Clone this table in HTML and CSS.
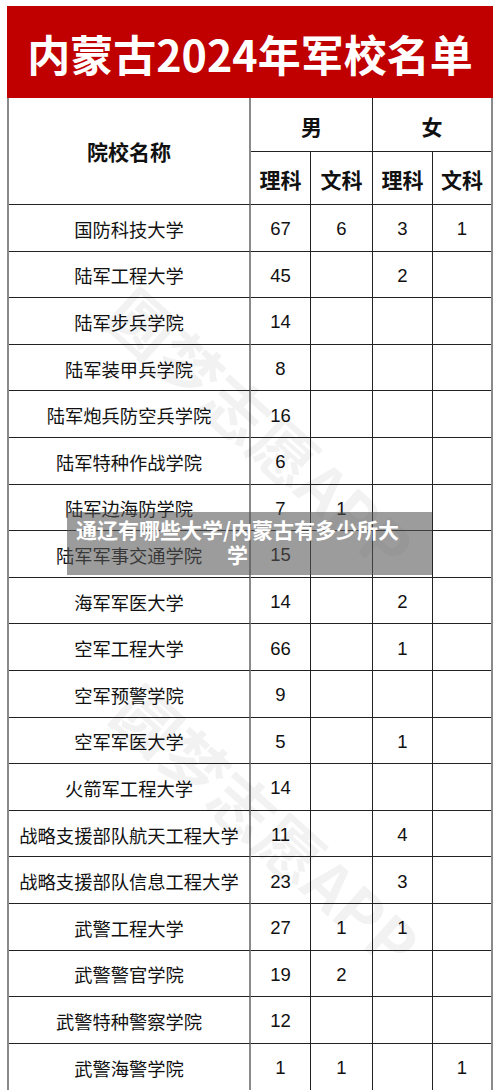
FILE: index.html
```html
<!DOCTYPE html>
<html lang="zh">
<head>
<meta charset="utf-8">
<link rel="stylesheet" href="styles.css">
</head>
<body>
<div class="page">
  <div class="sheet">
    <div class="title">内蒙古2024年军校名单</div>
    <div class="grid">
      <div class="cell hd name-h">院校名称</div>
      <div class="cell hd sex-m">男</div>
      <div class="cell hd sex-f">女</div>
      <div class="cell hd sub">理科</div><div class="cell hd sub">文科</div><div class="cell hd sub">理科</div><div class="cell hd sub">文科</div>

      <div class="cell nm">国防科技大学</div><div class="cell num">67</div><div class="cell num">6</div><div class="cell num">3</div><div class="cell num">1</div>
      <div class="cell nm">陆军工程大学</div><div class="cell num">45</div><div class="cell num"></div><div class="cell num">2</div><div class="cell num"></div>
      <div class="cell nm">陆军步兵学院</div><div class="cell num">14</div><div class="cell num"></div><div class="cell num"></div><div class="cell num"></div>
      <div class="cell nm">陆军装甲兵学院</div><div class="cell num">8</div><div class="cell num"></div><div class="cell num"></div><div class="cell num"></div>
      <div class="cell nm">陆军炮兵防空兵学院</div><div class="cell num">16</div><div class="cell num"></div><div class="cell num"></div><div class="cell num"></div>
      <div class="cell nm">陆军特种作战学院</div><div class="cell num">6</div><div class="cell num"></div><div class="cell num"></div><div class="cell num"></div>
      <div class="cell nm">陆军边海防学院</div><div class="cell num">7</div><div class="cell num">1</div><div class="cell num"></div><div class="cell num"></div>
      <div class="cell nm">陆军军事交通学院</div><div class="cell num">15</div><div class="cell num"></div><div class="cell num"></div><div class="cell num"></div>
      <div class="cell nm">海军军医大学</div><div class="cell num">14</div><div class="cell num"></div><div class="cell num">2</div><div class="cell num"></div>
      <div class="cell nm">空军工程大学</div><div class="cell num">66</div><div class="cell num"></div><div class="cell num">1</div><div class="cell num"></div>
      <div class="cell nm">空军预警学院</div><div class="cell num">9</div><div class="cell num"></div><div class="cell num"></div><div class="cell num"></div>
      <div class="cell nm">空军军医大学</div><div class="cell num">5</div><div class="cell num"></div><div class="cell num">1</div><div class="cell num"></div>
      <div class="cell nm">火箭军工程大学</div><div class="cell num">14</div><div class="cell num"></div><div class="cell num"></div><div class="cell num"></div>
      <div class="cell nm">战略支援部队航天工程大学</div><div class="cell num">11</div><div class="cell num"></div><div class="cell num">4</div><div class="cell num"></div>
      <div class="cell nm">战略支援部队信息工程大学</div><div class="cell num">23</div><div class="cell num"></div><div class="cell num">3</div><div class="cell num"></div>
      <div class="cell nm">武警工程大学</div><div class="cell num">27</div><div class="cell num">1</div><div class="cell num">1</div><div class="cell num"></div>
      <div class="cell nm">武警警官学院</div><div class="cell num">19</div><div class="cell num">2</div><div class="cell num"></div><div class="cell num"></div>
      <div class="cell nm">武警特种警察学院</div><div class="cell num">12</div><div class="cell num"></div><div class="cell num"></div><div class="cell num"></div>
      <div class="cell nm">武警海警学院</div><div class="cell num">1</div><div class="cell num">1</div><div class="cell num"></div><div class="cell num">1</div>
    </div>
  </div>
  <div class="mark mark-a">圆梦志愿APP</div>
  <div class="mark mark-b">圆梦志愿APP</div>
  <div class="banner">通辽有哪些大学/内蒙古有多少所大学</div>
</div>
</body>
</html>
```

FILE: styles.css
```css
html, body {
  margin: 0;
  padding: 0;
  background: #ffffff;
}
.page {
  position: relative;
  width: 500px;
  height: 1090px;
  overflow: hidden;
  font-family: "Noto Sans CJK SC", "Noto Sans", sans-serif;
  color: #111;
}
.sheet {
  padding-top: 6px;
  padding-left: 7px;
}
.title {
  width: 486px;
  height: 92px;
  background: #c00000;
  color: #ffffff;
  font-weight: 700;
  font-size: 43px;
  line-height: 94px;
  text-align: center;
  white-space: nowrap;
}
.grid {
  display: grid;
  width: 486px;
  box-sizing: border-box;
  border-left: 2px solid #8a8a8a;
  border-right: 2px solid #8a8a8a;
  grid-template-columns: 242px 60px 62px 60px 1fr;
  grid-template-rows: 54px 53px repeat(19, 46.6px);
}
.cell {
  display: flex;
  align-items: center;
  justify-content: center;
  box-sizing: border-box;
  border-bottom: 1px solid #222;
  border-right: 1px solid #222;
  white-space: nowrap;
}
.cell:nth-last-child(-n+5) {
  border-bottom: none;
}
.cell.nm, .cell.name-h {
  border-right: 2px solid #8a8a8a;
}
.cell.num:nth-child(5n+2) {
  border-right: none;
}
.hd {
  font-weight: 700;
  font-size: 21px;
  color: #111;
}
.name-h {
  grid-row: 1 / 3;
  grid-column: 1;
}
.sex-m {
  grid-row: 1;
  grid-column: 2 / 4;
  padding-top: 2px;
}
.sex-f {
  grid-row: 1;
  grid-column: 4 / 6;
  border-right: none;
  padding-top: 2px;
}
.sub {
  padding-top: 2px;
}
.sub:nth-child(7) {
  border-right: none;
}
.nm {
  font-size: 18.3px;
  color: #111;
  padding-top: 2px;
}
.num {
  font-family: "Liberation Sans", Arial, sans-serif;
  font-size: 18.5px;
  color: #111;
  padding-top: 3px;
}
.mark {
  position: absolute;
  font-family: "Noto Sans CJK SC", sans-serif;
  font-size: 64px;
  font-weight: 700;
  color: rgba(0, 0, 0, 0.05);
  white-space: nowrap;
  transform: translate(-50%, -50%) rotate(42deg);
  pointer-events: none;
}
.mark-a { left: 262px; top: 428px; }
.mark-b { left: 268px; top: 825px; }
.banner {
  position: absolute;
  left: 67px;
  top: 512px;
  width: 365px;
  height: 63px;
  box-sizing: border-box;
  padding: 5px 28px 0 4px;
  background: rgba(85, 85, 85, 0.58);
  color: #ffffff;
  font-weight: 700;
  font-size: 21px;
  line-height: 25px;
  text-align: center;
}
```
